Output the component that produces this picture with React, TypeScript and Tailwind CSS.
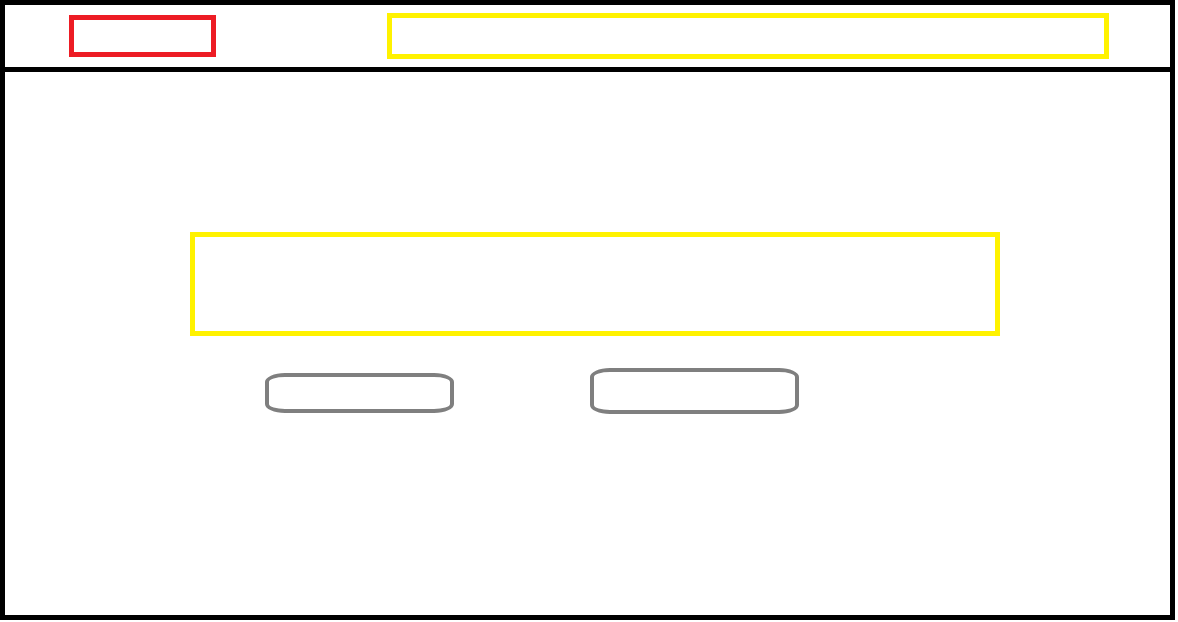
import React from 'react';

const App: React.FC = () => {
  return (
    <div className="w-[1178px] h-[622px] bg-white">
      <div className="w-[1175px] h-[620px] border-[5px] border-black flex flex-col">
        {/* header */}
        <header className="h-[67px] shrink-0 border-b-[5px] border-black flex items-center pl-[64px]">
          <div className="w-[147px] h-[42px] border-[5px] border-[#ed1c24]" />
          <div className="ml-[171px] w-[722px] h-[46px] border-[5px] border-[#fff200]" />
        </header>

        {/* content */}
        <main className="flex-1 pl-[185px]">
          <div className="mt-[160px] w-[810px] h-[104px] border-[5px] border-[#fff200]" />
          <div className="mt-[32px] flex items-end pl-[75px] gap-[136px]">
            <button className="w-[189px] h-[40px] border-[4px] border-[#7f7f7f] rounded-[20px/9px] mb-[1px]" />
            <button className="w-[209px] h-[46px] border-[4px] border-[#7f7f7f] rounded-[20px/9px]" />
          </div>
        </main>
      </div>
    </div>
  );
};

export default App;
